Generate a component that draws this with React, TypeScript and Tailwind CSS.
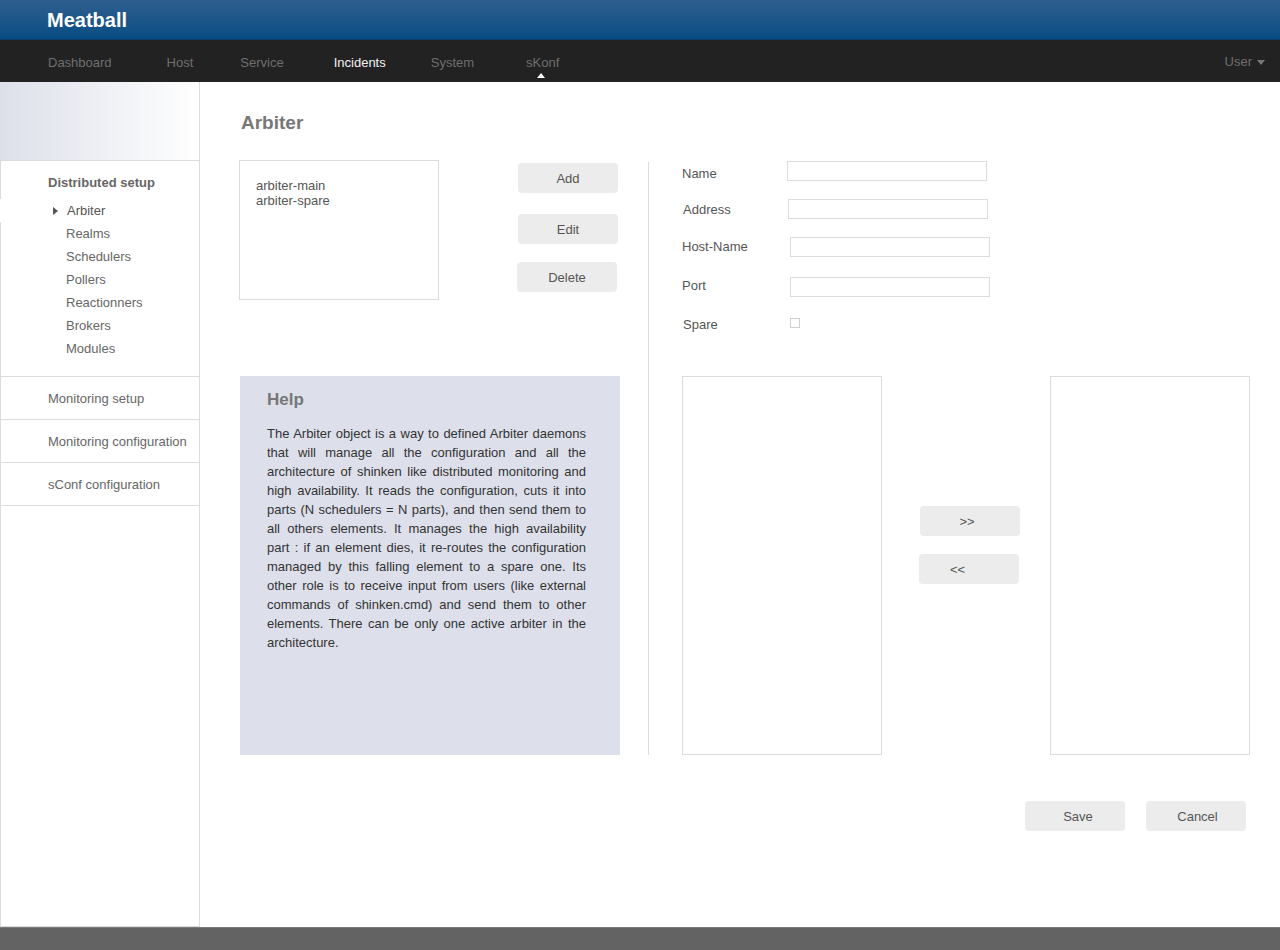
import React from "react";

const font = { fontFamily: '"Liberation Sans", Arial, sans-serif' };

function Btn({ label, className = "" }: { label: string; className?: string }) {
  return (
    <div className={`flex h-[30px] w-[100px] items-center justify-center rounded-[4px] bg-[#ececec] pt-[1px] text-[13px] text-[#555] ${className}`}>
      {label}
    </div>
  );
}

function Field({ label, mt, labelW, labelPl = 0, labelDy = 0 }: { label: string; mt: string; labelW: string; labelPl?: number; labelDy?: number }) {
  return (
    <div className={`flex h-[20px] ${mt}`}>
      <div className={`${labelW} text-[13px] leading-[20px] text-[#555]`} style={{ paddingLeft: labelPl, marginTop: labelDy }}>
        {label}
      </div>
      <div className="h-[20px] w-[200px] border border-[#dcdcdc] bg-white" />
    </div>
  );
}

export default function App() {
  const sub = ["Realms", "Schedulers", "Pollers", "Reactionners", "Brokers", "Modules"];
  return (
    <div className="flex h-[950px] w-[1280px] flex-col overflow-hidden bg-white" style={font}>
      {/* header */}
      <div className="flex h-[40px] items-center border-b border-[#0c3c63] bg-gradient-to-b from-[#2e5f8f] to-[#034c83] pl-[47px]">
        <div className="text-[20px] font-bold leading-[24px] text-white">Meatball</div>
      </div>
      {/* nav */}
      <div className="flex h-[42px] items-center bg-[#222] pt-[4px] text-[13px] text-[#6f6f6f]">
        <div className="ml-[48px] -mt-[1px]">Dashboard</div>
        <div className="ml-[55px]">Host</div>
        <div className="ml-[47px]">Service</div>
        <div className="ml-[50px] text-[#f2f2f2]">Incidents</div>
        <div className="ml-[45px] -mt-[1px]">System</div>
        <div className="relative ml-[52px]">
          sKonf
          <div className="absolute left-[11px] top-[20px] h-0 w-0 border-x-[4px] border-b-[5px] border-x-transparent border-b-white" />
        </div>
        <div className="ml-auto mr-[15px] flex items-center -mt-[3px]">
          User
          <div className="ml-[5px] mt-[1px] h-0 w-0 border-x-[4px] border-t-[5px] border-x-transparent border-t-[#777]" />
        </div>
      </div>
      {/* body */}
      <div className="flex flex-1">
        {/* sidebar */}
        <div className="flex w-[200px] flex-col border-r border-b border-[#dcdcdc] text-[13px] text-[#666]">
          <div className="h-[79px] border-b border-[#dcdcdc] bg-gradient-to-r from-[#dde0ea] to-white" />
          <div className="flex flex-1 flex-col border-l border-[#dcdcdc]">
            <div className="border-b border-[#dcdcdc] pb-[16px] pt-[12px]">
              <div className="pl-[47px] font-bold leading-[20px] text-[#666]">Distributed setup</div>
              <div className="-ml-px mt-[6px] flex h-[23px] items-center border-l border-white pl-[52px]">
                <div className="h-0 w-0 border-y-[4px] border-l-[5px] border-y-transparent border-l-[#555]" />
                <span className="ml-[9px] text-[#555]">Arbiter</span>
              </div>
              {sub.map((s) => (
                <div key={s} className="flex h-[23px] items-center pl-[65px]">
                  {s}
                </div>
              ))}
            </div>
            {["Monitoring setup", "Monitoring configuration", "sConf configuration"].map((s) => (
              <div key={s} className="flex h-[43px] items-center border-b border-[#dcdcdc] pl-[47px] pt-[2px]">
                {s}
              </div>
            ))}
          </div>
        </div>
        {/* main */}
        <div className="flex-1 pl-[39px] pt-[29px]">
          <div className="pl-[2px] text-[19px] font-bold leading-[24px] text-[#777]">Arbiter</div>
          <div className="mt-[25px] flex">
            {/* left col */}
            <div className="w-[381px]">
              <div className="flex">
                <div className="h-[140px] w-[200px] border border-[#dcdcdc] pl-[16px] pt-[17px] text-[13px] leading-[15px] text-[#555]">
                  <div>arbiter-main</div>
                  <div>arbiter-spare</div>
                </div>
                <div className="ml-[79px] flex flex-col">
                  <Btn label="Add" className="mt-[3px]" />
                  <Btn label="Edit" className="mt-[21px]" />
                  <Btn label="Delete" className="-ml-px mt-[18px]" />
                </div>
              </div>
              <div className="ml-px mt-[76px] h-[379px] w-[380px] bg-[#dde0ea] pl-[27px] pr-[34px] pt-[14px]">
                <div className="text-[17px] font-bold leading-[20px] text-[#777]">Help</div>
                <p className="mt-[14px] text-justify text-[13px] leading-[19px] text-[#333]">
                  The Arbiter object is a way to defined Arbiter daemons that will manage all the configuration and all the architecture of shinken like distributed monitoring and high availability. It reads the configuration, cuts it into parts (N schedulers = N parts), and then send them to all others elements. It manages the high availability part : if an element dies, it re-routes the configuration managed by this falling element to a spare one. Its other role is to receive input from users (like external commands of shinken.cmd) and send them to other elements. There can be only one active arbiter in the architecture.
                </p>
              </div>
            </div>
            {/* divider */}
            <div className="ml-[28px] mt-[2px] h-[593px] border-l border-[#dcdcdc]" />
            {/* right col */}
            <div className="ml-[33px] w-[568px]">
              <Field label="Name" mt="mt-[1px]" labelW="w-[105px]" labelDy={3} />
              <Field label="Address" mt="mt-[18px]" labelW="w-[106px]" labelPl={1} labelDy={1} />
              <Field label="Host-Name" mt="mt-[18px]" labelW="w-[108px]" />
              <Field label="Port" mt="mt-[20px]" labelW="w-[108px]" labelDy={-1} />
              <div className="mt-[17px] flex h-[20px]">
                <div className="mt-[1px] w-[108px] pl-[1px] text-[13px] leading-[20px] text-[#555]">Spare</div>
                <div className="mt-[4px] h-[10px] w-[10px] border border-[#d0d0d0] bg-white" />
              </div>
              <div className="mt-[42px] flex">
                <div className="h-[379px] w-[200px] border border-[#dcdcdc]" />
                <div className="flex w-[168px] flex-col">
                  <Btn label=">>" className="ml-[38px] mt-[130px] pr-[6px]" />
                  <Btn label="<<" className="ml-[37px] mt-[18px] pr-[23px]" />
                </div>
                <div className="h-[379px] w-[200px] border border-[#dcdcdc]" />
              </div>
              <div className="ml-[343px] mt-[46px] flex gap-[21px]">
                <Btn label="Save" className="pl-[6px]" />
                <Btn label="Cancel" className="pl-[3px]" />
              </div>
            </div>
          </div>
        </div>
      </div>
      {/* footer */}
      <div className="h-[23px] border-t border-[#7a7a7a] bg-[#636363]" />
    </div>
  );
}
